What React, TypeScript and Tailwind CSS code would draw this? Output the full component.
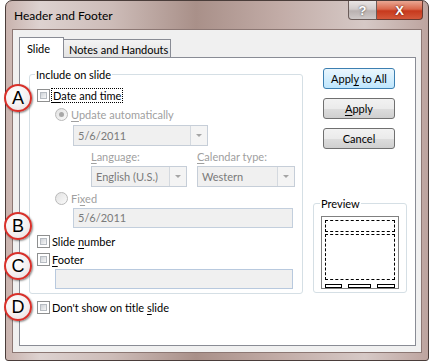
import type { ReactNode } from 'react'

const Check = () => (
  <span className="inline-block w-[13px] h-[13px] shrink-0 border border-[#8e8f8f] bg-white p-[2px]">
    <span className="block w-full h-full border border-[#b7bcc2] bg-gradient-to-br from-[#cfd3d8] to-[#f7f7f7]" />
  </span>
)

const Radio = ({ on }: { on?: boolean }) => (
  <span className="inline-flex items-center justify-center w-[13px] h-[13px] shrink-0 rounded-full border border-[#b9b9b9] bg-gradient-to-br from-[#e2e2e2] to-[#fafafa]">
    {on && <span className="block w-[5px] h-[5px] rounded-full bg-[#a8a8a8]" />}
  </span>
)

const U = ({ children }: { children: ReactNode }) => <span className="underline underline-offset-2">{children}</span>

const Combo = ({ text, w }: { text: string; w: string }) => (
  <div className={`flex h-[21px] ${w} border border-[#c6ced8] bg-[#f0f0f0] text-[#7a7a7a]`}>
    <div className="flex-1 pl-[4px] leading-[19px] whitespace-nowrap">{text}</div>
    <div className="flex w-[17px] items-center justify-center border-l border-[#d4d9df] bg-[#f4f4f4]">
      <span className="block w-0 h-0 border-x-[3px] border-x-transparent border-t-[3px] border-t-[#a5a5a5]" />
    </div>
  </div>
)

const Button = ({ children, def }: { children: ReactNode; def?: boolean }) => (
  <div
    className={`flex h-[21px] w-[72px] items-center justify-center rounded-[3px] border ${
      def
        ? 'border-[#3c7fb1] bg-gradient-to-b from-[#eaf6fd] to-[#bee6fd]'
        : 'border-[#707070] bg-[linear-gradient(#f2f2f2_0%,#ebebeb_50%,#dddddd_51%,#cfcfcf_100%)]'
    }`}
  >
    {children}
  </div>
)

const Badge = ({ letter, top }: { letter: string; top: string }) => (
  <div
    className={`absolute left-[4px] ${top} flex h-[28px] w-[28px] items-center justify-center rounded-full border-2 border-[#d8302a] bg-[radial-gradient(circle_at_40%_35%,#ffffff_0%,#f4f0f0_55%,#e6d8d8_100%)] shadow-[1px_1px_2px_rgba(0,0,0,0.45)] font-['Liberation_Sans',sans-serif] text-[18px] leading-none text-black`}
  >
    {letter}
  </div>
)

export default function App() {
  return (
    <div className="relative h-[364px] w-[432px] overflow-hidden bg-white font-['Lato',sans-serif] text-[11px] leading-[15px] text-black">
      {/* window frame */}
      <div className="ml-[5px] flex h-[361px] w-[424px] flex-col rounded-t-[7px] rounded-b-[3px] border border-[#4a3d3a] bg-[linear-gradient(90deg,#c9b3ae_0%,#ddd2d0_8%,#cdbcb8_25%,#a99089_45%,#c2aca7_65%,#d6c9c6_85%,#bda49f_100%)]">
        {/* title bar */}
        <div className="flex h-[28px] items-start">
          <div className="pl-[8px] pt-[7px] text-[12px]">Header and Footer</div>
          <div className="ml-auto mr-[5px] flex">
            <div className="flex h-[19px] w-[29px] items-center justify-center rounded-bl-[4px] border border-t-0 border-[#6a5c59] bg-[linear-gradient(#e9e5e4_0%,#d2cccb_45%,#b9b1b0_55%,#cfc9c8_100%)] font-['Liberation_Sans',sans-serif] text-[13px] font-bold text-white [text-shadow:0_0_2px_#333]">
              ?
            </div>
            <div className="flex h-[19px] w-[46px] items-center justify-center rounded-br-[4px] border border-l-0 border-t-0 border-[#6a3a30] bg-[linear-gradient(#e9a793_0%,#d9684c_45%,#c7391d_55%,#d4583a_100%)] font-['Liberation_Sans',sans-serif] text-[13px] font-bold text-white [text-shadow:0_0_2px_#4a1205]">
              X
            </div>
          </div>
        </div>

        {/* client */}
        <div className="ml-[6px] h-[324px] w-[410px] border border-[#8c7773] bg-[#f0f0f0] pl-[6px] pt-[7px]">
          {/* tabs */}
          <div className="relative z-10 -mb-px flex items-end whitespace-nowrap">
            <div className="h-[21px] w-[45px] border border-b-0 border-[#898c95] bg-white pl-[7px] pt-[3px]">Slide</div>
            <div className="-ml-px h-[19px] w-[108px] border border-[#898c95] bg-gradient-to-b from-[#f3f3f3] to-[#e3e3e3] pl-[5px] pt-[2px]">
              Notes and Handouts
            </div>
          </div>

          {/* panel */}
          <div className="flex h-[289px] w-[397px] border border-[#898c95] bg-white whitespace-nowrap">
            {/* left column */}
            <div className="ml-[9px] mt-[16px] w-[274px]">
              <div className="relative h-[220px] w-[274px] rounded-[3px] border border-[#d5dfe5]">
                <span className="absolute -top-[8px] left-[5px] bg-white px-[1px] leading-[15px]">Include on slide</span>

                <div className="mt-[13px] flex h-[15px] items-center pl-[7px]">
                  <Check />
                  <span className="ml-[1px] border border-dotted border-black px-[1px] leading-[13px]">
                    <U>D</U>ate and time
                  </span>
                </div>

                <div className="mt-[4px] flex h-[15px] items-center gap-[3px] pl-[25px] text-[#a0a0a0]">
                  <Radio on />
                  <span>
                    <U>U</U>pdate automatically
                  </span>
                </div>

                <div className="ml-[43px] mt-[3px]">
                  <Combo text="5/6/2011" w="w-[135px]" />
                </div>

                <div className="mt-[3px] flex h-[15px] text-[#a0a0a0]">
                  <span className="ml-[61px] w-[106px]">
                    <U>L</U>anguage:
                  </span>
                  <span>
                    <U>C</U>alendar type:
                  </span>
                </div>

                <div className="ml-[61px] mt-[2px] flex gap-[10px]">
                  <Combo text="English (U.S.)" w="w-[96px]" />
                  <Combo text="Western" w="w-[98px]" />
                </div>

                <div className="mt-[4px] flex h-[15px] items-center gap-[3px] pl-[25px] text-[#a0a0a0]">
                  <Radio />
                  <span>
                    Fi<U>x</U>ed
                  </span>
                </div>

                <div className="ml-[43px] mt-[2px] h-[20px] w-[220px] border border-[#c3cfdd] bg-[#f0f0f0] pl-[4px] leading-[18px] text-[#7a7a7a]">
                  5/6/2011
                </div>

                <div className="mt-[6px] flex h-[15px] items-center gap-[2px] pl-[7px]">
                  <Check />
                  <span>
                    Slide <U>n</U>umber
                  </span>
                </div>

                <div className="mt-[3px] flex h-[15px] items-center gap-[2px] pl-[7px]">
                  <Check />
                  <span>
                    <U>F</U>ooter
                  </span>
                </div>

                <div className="ml-[25px] mt-[2px] h-[20px] w-[238px] border border-[#b8c9de] bg-[#f0f0f0]" />
              </div>

              <div className="mt-[6px] flex h-[15px] items-center gap-[2px] pl-[8px]">
                <Check />
                <span>
                  Don&apos;t show on title <U>s</U>lide
                </span>
              </div>
            </div>

            {/* right column */}
            <div className="ml-[10px] flex flex-col">
              <div className="ml-[10px] mt-[10px] flex flex-col gap-[9px]">
                <Button def>
                  <span>
                    Appl<U>y</U> to All
                  </span>
                </Button>
                <Button>
                  <span>
                    <U>A</U>pply
                  </span>
                </Button>
                <Button>Cancel</Button>
              </div>

              <div className="relative mt-[54px] h-[90px] w-[94px] rounded-[3px] border border-[#d5dfe5]">
                <span className="absolute -top-[8px] left-[6px] bg-white px-[1px] leading-[15px]">Preview</span>
                <div className="ml-[7px] mt-[12px] h-[73px] w-[78px] border border-[#808080] pl-[3px] pt-[3px]">
                  <div className="h-[12px] w-[70px] border border-dashed border-black" />
                  <div className="mt-[2px] h-[46px] w-[70px] border border-dashed border-black" />
                  <div className="mt-[4px] flex h-[4px] w-[70px] justify-between">
                    <div className="w-[17px] border border-black" />
                    <div className="w-[23px] border border-black" />
                    <div className="w-[18px] border border-black" />
                  </div>
                </div>
              </div>
            </div>
          </div>
        </div>
      </div>

      <Badge letter="A" top="top-[84px]" />
      <Badge letter="B" top="top-[212px]" />
      <Badge letter="C" top="top-[252px]" />
      <Badge letter="D" top="top-[293px]" />
    </div>
  )
}
